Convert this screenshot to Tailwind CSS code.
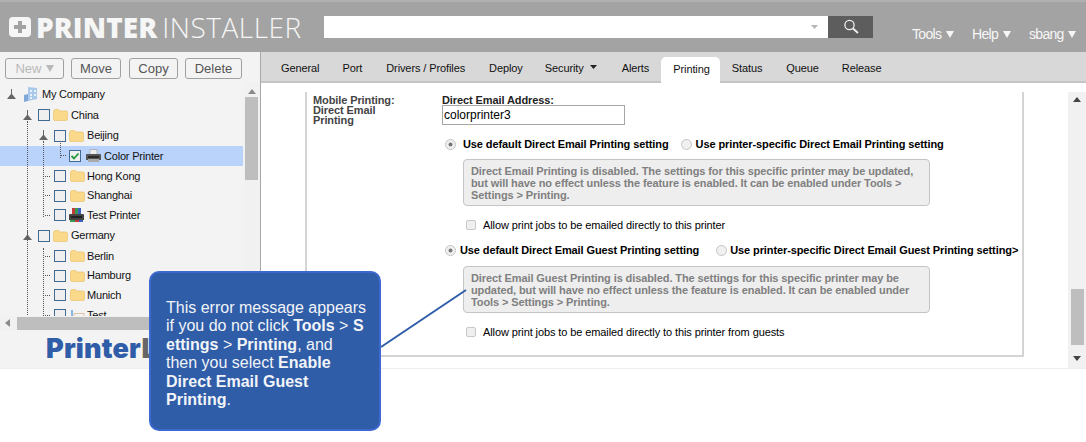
<!DOCTYPE html>
<html lang="en">
<head>
<meta charset="UTF-8">
<title>Printer Installer</title>
<script src="https://cdn.jsdelivr.net/npm/@tailwindcss/browser@4"></script>
</head>
<body class="bg-white font-['Liberation_Sans',Arial,sans-serif] text-black">
<div class="relative w-[1086px] h-[442px] overflow-hidden">
  <!-- header -->
  <header class="h-[52px] bg-[#a3a3a3] flex border-t-2 border-[#b0b0b0]">
    <div class="flex items-center pl-[9px] w-[324px] h-[50px] text-[#f6f6f6]">
      <svg width="22" height="20" viewBox="0 0 22 20" class="mr-[5px] shrink-0">
        <path fill="#f6f6f6" fill-rule="evenodd" d="M4 0h14a4 4 0 0 1 4 4v12a4 4 0 0 1-4 4H4a4 4 0 0 1-4-4V4a4 4 0 0 1 4-4zM9 4v4H5v4h4v4h4v-4h4V8h-4V4z"/>
      </svg>
      <span class="text-[28px] font-extrabold leading-none tracking-[0.1px] font-['Open_Sans',sans-serif]">PRINTER</span>
      <span class="text-[28px] leading-none ml-[5px] tracking-[0.5px] font-['Open_Sans',sans-serif] font-light">INSTALLER</span>
    </div>
    <div class="flex mt-[14px] h-[22px]">
      <div class="w-[504px] bg-white flex items-center justify-end pr-[10px]">
        <svg width="7" height="4" viewBox="0 0 7 4"><path fill="#b5b5b5" d="M0 0h7L3.500 4z"/></svg>
      </div>
      <div class="w-[45px] bg-[#5d5d5d] flex items-center justify-center">
        <svg width="16" height="16" viewBox="0 0 16 16" fill="none" stroke="#f0f0f0" stroke-width="1.3"><circle cx="6.500" cy="6" r="4.600"/><path d="M10 9.500l5 4.500" stroke-width="1.800"/></svg>
      </div>
    </div>
    <nav class="flex ml-[39px] mt-[25px] h-[14px] text-[14px] leading-[14px] text-[#f6f6f6] whitespace-nowrap tracking-[-0.7px]">
      <span class="flex items-center w-[60px]">Tools<svg width="8" height="7" viewBox="0 0 8 7" class="ml-[5px]"><path fill="#f6f6f6" d="M0 0h8L4 7z"/></svg></span>
      <span class="flex items-center w-[57px]">Help<svg width="8" height="7" viewBox="0 0 8 7" class="ml-[5px]"><path fill="#f6f6f6" d="M0 0h8L4 7z"/></svg></span>
      <span class="flex items-center">sbang<svg width="8" height="7" viewBox="0 0 8 7" class="ml-[4px]"><path fill="#f6f6f6" d="M0 0h8L4 7z"/></svg></span>
    </nav>
  </header>

  <div class="flex h-[316px]">
    <!-- left sidebar -->
    <aside class="relative w-[261px] shrink-0 bg-[#f3f3f3] border-r border-[#a8a8a8] overflow-hidden">
      <div class="flex pl-[5px] pt-[6px]">
        <button class="w-[59px] h-[21px] border border-[#a0a0a0] rounded-[3px] text-[13px] leading-none text-[#b8b8b8] flex items-center justify-center">New<svg width="8" height="7" viewBox="0 0 8 7" class="ml-[4px]"><path fill="#b8b8b8" d="M0 0h8L4 7z"/></svg></button>
        <button class="ml-[7px] w-[50px] h-[21px] border border-[#a0a0a0] rounded-[3px] text-[13px] leading-none text-[#555]">Move</button>
        <button class="ml-[8px] w-[49px] h-[21px] border border-[#a0a0a0] rounded-[3px] text-[13px] leading-none text-[#555]">Copy</button>
        <button class="ml-[7px] w-[57px] h-[21px] border border-[#a0a0a0] rounded-[3px] text-[13px] leading-none text-[#555]">Delete</button>
      </div>

      <!-- tree -->
      <div class="relative h-[234px] mt-[3px] pt-[1px] overflow-hidden text-[11px] tracking-[-0.2px] leading-none text-[#111]">
        <div class="absolute left-[27px] top-[39px] w-0 h-[200px] border-l border-dotted border-[#555]"></div>
        <div class="absolute left-[43px] top-[59px] w-0 h-[76px] border-l border-dotted border-[#555]"></div>
        <div class="absolute left-[43px] top-[166px] w-0 h-[70px] border-l border-dotted border-[#555]"></div>
        <div class="absolute left-[60px] top-[59px] w-0 h-[17px] border-l border-dotted border-[#555]"></div>

        <div class="h-[22px] flex items-center pl-[7px]">
          <svg width="9" height="11" viewBox="0 0 9 11" class="mr-[7px] shrink-0"><path fill="#666" d="M4 0h1v5l4 5H0l4-5z"/></svg>
          <svg width="16" height="16" viewBox="0 0 16 16" class="mr-[3px] shrink-0"><path fill="#a9c8ea" d="M5 1l9 1v11l-9 2z"/><path fill="#7fa8d8" d="M1 9l4-1v7l-4 1z"/><path fill="#e8f1fb" d="M7 4h2v2H7zM11 4h2v2h-2zM7 8h2v2H7zM11 8h2v2h-2zM7 11h2v2H7z"/></svg>
          <span>My Company</span>
        </div>
        <div class="h-[20px] flex items-center pl-[23px]">
          <svg width="9" height="11" viewBox="0 0 9 11" class="mr-[6px] shrink-0"><path fill="#666" d="M4 0h1v5l4 5H0l4-5z"/></svg>
          <span class="w-[12px] h-[12px] shrink-0 border border-[#3e6a94] bg-[#efefef] mr-[3px]"></span>
          <svg width="15" height="12" viewBox="0 0 15 12" class="mr-[3px] shrink-0"><path fill="#fbd98a" stroke="#e8bd5c" stroke-width=".6" d="M.5 2.500q0-2 2-2h3l1.500 1.500h6q1.500 0 1.500 1.500v6.500q0 1.500-1.500 1.500h-11q-1.500 0-1.500-1.500z"/></svg>
          <span>China</span>
        </div>
        <div class="h-[21px] flex items-center pl-[39px]">
          <svg width="9" height="11" viewBox="0 0 9 11" class="mr-[6px] shrink-0"><path fill="#666" d="M4 0h1v5l4 5H0l4-5z"/></svg>
          <span class="w-[12px] h-[12px] shrink-0 border border-[#3e6a94] bg-[#efefef] mr-[3px]"></span>
          <svg width="15" height="12" viewBox="0 0 15 12" class="mr-[3px] shrink-0"><path fill="#fbd98a" stroke="#e8bd5c" stroke-width=".6" d="M.5 2.500q0-2 2-2h3l1.500 1.500h6q1.500 0 1.500 1.500v6.500q0 1.500-1.500 1.500h-11q-1.500 0-1.500-1.500z"/></svg>
          <span>Beijing</span>
        </div>
        <div class="h-[20px] w-[243px] bg-[#b9d3fb] flex items-center pl-[61px]">
          <span class="w-[5px] mb-[1px] mr-[3px] border-t border-dotted border-[#555]"></span>
          <span class="w-[12px] h-[12px] shrink-0 border border-[#3e6a94] bg-[#f0f0f0] mr-[5px] flex items-center justify-center">
            <svg width="10" height="10" viewBox="0 0 10 10" fill="none" stroke="#1e9a3c" stroke-width="1.800"><path d="M1.500 5l2.500 2.500 4.500-5"/></svg>
          </span>
          <svg width="15" height="14" viewBox="0 0 15 14" class="mr-[3px] shrink-0"><path fill="#eeeeee" stroke="#888" stroke-width=".5" d="M4 .5h7v5H4z"/><path fill="#555" d="M1 5h13q1 0 1 1v5H0V6q0-1 1-1z"/><path fill="#2a2a2a" d="M2 7h11v2H2z"/><path fill="#aaa" d="M2 10h11v3H2z"/></svg>
          <span>Color Printer</span>
        </div>
        <div class="h-[20px] flex items-center pl-[45px]">
          <span class="w-[5px] mr-[4px] border-t border-dotted border-[#555]"></span>
          <span class="w-[12px] h-[12px] shrink-0 border border-[#3e6a94] bg-[#efefef] mr-[4px]"></span>
          <svg width="15" height="12" viewBox="0 0 15 12" class="mr-[2px] shrink-0"><path fill="#fbd98a" stroke="#e8bd5c" stroke-width=".6" d="M.5 2.500q0-2 2-2h3l1.500 1.500h6q1.500 0 1.500 1.500v6.500q0 1.500-1.500 1.500h-11q-1.500 0-1.500-1.500z"/></svg>
          <span>Hong Kong</span>
        </div>
        <div class="h-[19px] flex items-center pl-[45px]">
          <span class="w-[5px] mr-[4px] border-t border-dotted border-[#555]"></span>
          <span class="w-[12px] h-[12px] shrink-0 border border-[#3e6a94] bg-[#efefef] mr-[4px]"></span>
          <svg width="15" height="12" viewBox="0 0 15 12" class="mr-[2px] shrink-0"><path fill="#fbd98a" stroke="#e8bd5c" stroke-width=".6" d="M.5 2.500q0-2 2-2h3l1.500 1.500h6q1.500 0 1.500 1.500v6.500q0 1.500-1.500 1.500h-11q-1.500 0-1.500-1.500z"/></svg>
          <span>Shanghai</span>
        </div>
        <div class="h-[20px] flex items-center pl-[45px]">
          <span class="w-[5px] mr-[4px] border-t border-dotted border-[#555]"></span>
          <span class="w-[12px] h-[12px] shrink-0 border border-[#3e6a94] bg-[#efefef] mr-[3px]"></span>
          <svg width="15" height="15" viewBox="0 0 15 15" class="mr-[3px] shrink-0"><path fill="#c23b3b" d="M3 0h3v6H3z"/><path fill="#3b9a52" d="M6 0h3v6H6z"/><path fill="#3b62c2" d="M9 0h3v6H9z"/><path fill="#444" d="M1 6h13q1 0 1 1v5H0V7q0-1 1-1z"/><path fill="#222" d="M2 8h11v2H2z"/><path fill="#3b9a52" d="M1 12h5v2H1z"/><path fill="#c23b3b" d="M6 12h4v2H6z"/><path fill="#3b62c2" d="M10 12h4v2h-4z"/></svg>
          <span>Test Printer</span>
        </div>
        <div class="h-[21px] flex items-center pl-[23px]">
          <svg width="9" height="11" viewBox="0 0 9 11" class="mr-[6px] shrink-0"><path fill="#666" d="M4 0h1v5l4 5H0l4-5z"/></svg>
          <span class="w-[12px] h-[12px] shrink-0 border border-[#3e6a94] bg-[#efefef] mr-[3px]"></span>
          <svg width="15" height="12" viewBox="0 0 15 12" class="mr-[3px] shrink-0"><path fill="#fbd98a" stroke="#e8bd5c" stroke-width=".6" d="M.5 2.500q0-2 2-2h3l1.500 1.500h6q1.500 0 1.500 1.500v6.500q0 1.500-1.500 1.500h-11q-1.500 0-1.500-1.500z"/></svg>
          <span>Germany</span>
        </div>
        <div class="h-[20px] flex items-center pl-[45px]">
          <span class="w-[5px] mr-[4px] border-t border-dotted border-[#555]"></span>
          <span class="w-[12px] h-[12px] shrink-0 border border-[#3e6a94] bg-[#efefef] mr-[4px]"></span>
          <svg width="15" height="12" viewBox="0 0 15 12" class="mr-[2px] shrink-0"><path fill="#fbd98a" stroke="#e8bd5c" stroke-width=".6" d="M.5 2.500q0-2 2-2h3l1.500 1.500h6q1.500 0 1.500 1.500v6.500q0 1.500-1.500 1.500h-11q-1.500 0-1.500-1.500z"/></svg>
          <span>Berlin</span>
        </div>
        <div class="h-[19px] flex items-center pl-[45px]">
          <span class="w-[5px] mr-[4px] border-t border-dotted border-[#555]"></span>
          <span class="w-[12px] h-[12px] shrink-0 border border-[#3e6a94] bg-[#efefef] mr-[4px]"></span>
          <svg width="15" height="12" viewBox="0 0 15 12" class="mr-[2px] shrink-0"><path fill="#fbd98a" stroke="#e8bd5c" stroke-width=".6" d="M.5 2.500q0-2 2-2h3l1.500 1.500h6q1.500 0 1.500 1.500v6.500q0 1.500-1.500 1.500h-11q-1.500 0-1.500-1.500z"/></svg>
          <span>Hamburg</span>
        </div>
        <div class="h-[20px] flex items-center pl-[45px]">
          <span class="w-[5px] mr-[4px] border-t border-dotted border-[#555]"></span>
          <span class="w-[12px] h-[12px] shrink-0 border border-[#3e6a94] bg-[#efefef] mr-[4px]"></span>
          <svg width="15" height="12" viewBox="0 0 15 12" class="mr-[2px] shrink-0"><path fill="#fbd98a" stroke="#e8bd5c" stroke-width=".6" d="M.5 2.500q0-2 2-2h3l1.500 1.500h6q1.500 0 1.500 1.500v6.500q0 1.500-1.500 1.500h-11q-1.500 0-1.500-1.500z"/></svg>
          <span>Munich</span>
        </div>
        <div class="h-[20px] flex items-center pl-[45px]">
          <span class="w-[5px] mr-[4px] border-t border-dotted border-[#555]"></span>
          <span class="w-[12px] h-[12px] shrink-0 border border-[#3e6a94] bg-[#efefef] mr-[4px]"></span>
          <svg width="15" height="12" viewBox="0 0 15 12" class="mr-[2px] shrink-0"><path fill="#f3f3f3" stroke="#d9b98a" stroke-width=".8" d="M4 4.500h10v7H4z"/><path fill="#8ab8e6" d="M1 1h2v10H1z"/></svg>
          <span>Test</span>
        </div>
        <!-- tree vertical scrollbar -->
        <div class="absolute left-[244px] top-0 w-[16px] h-[234px] bg-[#f1f1f1] flex flex-col items-start pl-[1px]">
          <svg width="8" height="5" viewBox="0 0 8 5" class="mt-[7px] ml-[3px]"><path fill="#8a8a8a" d="M4 0l4 5H0z"/></svg>
          <div class="w-[13px] h-[83px] mt-[3px] bg-[#bebebe]"></div>
        </div>
      </div>

      <!-- horizontal scrollbar -->
      <div class="h-[14px] bg-[#f1f1f1] flex items-center pl-[5px]">
        <svg width="5" height="8" viewBox="0 0 5 8"><path fill="#8a8a8a" d="M0 4l5-4v8z"/></svg>
        <div class="ml-[7px] w-[220px] h-[13px] bg-[#bebebe]"></div>
      </div>
      <div class="pl-[46px] pt-[4px] text-[27px] leading-[30px] font-black tracking-[0.2px] text-[#2f5da8] whitespace-nowrap font-['Inter',sans-serif]">Printer<span class="text-[#666]">Logic</span></div>
    </aside>

    <!-- right panel -->
    <main class="relative flex-1 min-w-0">
      <div class="h-[31px] bg-[#d8d8d8] border-b-2 border-[#c4c4c4] flex items-end pl-[8px] text-[11px] tracking-[-0.1px] text-[#111] whitespace-nowrap">
        <span class="h-[26px] pl-[12px] pr-[11px] pt-[5px]">General</span>
        <span class="h-[26px] px-[12px] pt-[5px]">Port</span>
        <span class="h-[26px] px-[12px] pt-[5px]">Drivers / Profiles</span>
        <span class="h-[26px] pl-[12px] pr-[11px] pt-[5px]">Deploy</span>
        <span class="h-[26px] px-[11px] pt-[5px] flex items-start">Security<svg width="7" height="4" viewBox="0 0 7 4" class="ml-[6px] mt-[5px]"><path fill="#222" d="M0 0h7L3.500 4z"/></svg></span>
        <span class="h-[26px] pl-[14px] pr-[13px] pt-[5px]">Alerts</span>
        <span class="h-[26px] -mb-[2px] ml-[-1px] pl-[12px] pr-[10px] pt-[4px] bg-white rounded-t-[5px]">Printing</span>
        <span class="h-[26px] pl-[12px] pr-[13px] pt-[5px]">Status</span>
        <span class="h-[26px] px-[11px] pt-[5px]">Queue</span>
        <span class="h-[26px] px-[12px] pt-[5px]">Release</span>
      </div>

      <div class="relative h-[285px] flex">
        <div class="w-[44px] shrink-0"></div>
        <div class="w-[719px] h-[265px] mt-[9px] border-l-2 border-b-2 border-r-2 border-[#d4d4d4] flex text-[11px] tracking-[-0.1px] leading-[10px] pl-[6px] pt-[3px]">
          <div class="w-[129px] shrink-0 text-[#444] font-bold">Mobile Printing:<br>Direct Email<br>Printing</div>
          <div class="flex-1 min-w-0">
            <div class="font-bold text-[#222] leading-[11px]">Direct Email Address:</div>
            <div class="mt-[-1px] w-[183px] h-[20px] border border-[#a6a6a6] px-[1px] text-[12px] leading-[18px] tracking-normal">colorprinter3</div>
            <div class="flex items-center mt-[12px] h-[14px] whitespace-nowrap font-bold">
              <svg width="11" height="11" viewBox="0 0 11 11" class="shrink-0 ml-[3px] mr-[7px]"><circle cx="5.500" cy="5.500" r="5" fill="#f0f0f0" stroke="#c4c4c4"/><circle cx="5.500" cy="5.500" r="2" fill="#777"/></svg>
              <span>Use default Direct Email Printing setting</span>
              <svg width="11" height="11" viewBox="0 0 11 11" class="shrink-0 ml-[12px] mr-[4px]"><circle cx="5.500" cy="5.500" r="5" fill="#f0f0f0" stroke="#c4c4c4"/></svg>
              <span>Use printer-specific Direct Email Printing setting</span>
            </div>
            <div class="ml-[21px] mt-[8px] w-[467px] h-[47px] border border-[#c4c4c4] rounded-[4px] bg-[#eeeeee] text-[#808080] font-bold leading-[12px] px-[7px] pt-[5px] whitespace-nowrap">Direct Email Printing is disabled. The settings for this specific printer may be updated,<br>but will have no effect unless the feature is enabled. It can be enabled under Tools &gt;<br>Settings &gt; Printing.</div>
            <div class="flex items-center mt-[12px] ml-[24px] h-[14px] whitespace-nowrap">
              <span class="w-[10px] h-[10px] shrink-0 rounded-[2px] border border-[#c8c8c8] bg-[#efefef] mr-[7px]"></span>
              <span>Allow print jobs to be emailed directly to this printer</span>
            </div>
            <div class="flex items-center mt-[11px] h-[14px] whitespace-nowrap font-bold">
              <svg width="11" height="11" viewBox="0 0 11 11" class="shrink-0 ml-[3px] mr-[4px]"><circle cx="5.500" cy="5.500" r="5" fill="#f0f0f0" stroke="#c4c4c4"/><circle cx="5.500" cy="5.500" r="2" fill="#777"/></svg>
              <span>Use default Direct Email Guest Printing setting</span>
              <svg width="11" height="11" viewBox="0 0 11 11" class="shrink-0 ml-[17px] mr-[3px]"><circle cx="5.500" cy="5.500" r="5" fill="#f0f0f0" stroke="#c4c4c4"/></svg>
              <span>Use printer-specific Direct Email Guest Printing setting&gt;</span>
            </div>
            <div class="ml-[21px] mt-[9px] w-[467px] h-[47px] border border-[#c4c4c4] rounded-[4px] bg-[#eeeeee] text-[#808080] font-bold leading-[12px] px-[7px] pt-[5px] whitespace-nowrap">Direct Email Guest Printing is disabled. The settings for this specific printer may be<br>updated, but will have no effect unless the feature is enabled. It can be enabled under<br>Tools &gt; Settings &gt; Printing.</div>
            <div class="flex items-center mt-[12px] ml-[24px] h-[14px] whitespace-nowrap">
              <span class="w-[10px] h-[10px] shrink-0 rounded-[2px] border border-[#c8c8c8] bg-[#efefef] mr-[7px]"></span>
              <span>Allow print jobs to be emailed directly to this printer from guests</span>
            </div>
          </div>
        </div>
        <!-- main scrollbar -->
        <div class="absolute right-0 top-[9px] bottom-0 w-[18px] bg-[#f1f1f1] flex flex-col items-center">
          <svg width="8" height="5" viewBox="0 0 8 5" class="shrink-0 mt-[5px]"><path fill="#444" d="M4 0l4 5H0z"/></svg>
          <div class="shrink-0 w-[13px] h-[56px] mt-[187px] bg-[#bebebe]"></div>
          <svg width="8" height="5" viewBox="0 0 8 5" class="shrink-0 mt-[11px]"><path fill="#444" d="M4 5l4-5H0z"/></svg>
        </div>
      </div>
    </main>
  </div>
  <div class="h-px bg-[#eeeeee]"></div>

  <!-- callout -->
  <svg width="90" height="62" viewBox="0 0 90 62" class="absolute left-[379px] top-[288px]"><path d="M2 59L87 2" stroke="#2f5da8" stroke-width="2" fill="none"/></svg>
  <div class="absolute left-[149px] top-[271px] w-[232px] h-[160px] bg-[#2f5da8] border-2 border-[#3d68d0] rounded-[10px] pl-[15px] pt-[26px] text-[16px] leading-[18.4px] text-[#f2f4f8] whitespace-nowrap">
    This error message appears<br>if you do not click <b>Tools</b> &gt; <b>S</b><br><b>ettings</b> &gt; <b>Printing</b>, and<br>then you select <b>Enable</b><br><b>Direct Email Guest</b><br><b>Printing</b>.
  </div>
</div>
</body>
</html>
